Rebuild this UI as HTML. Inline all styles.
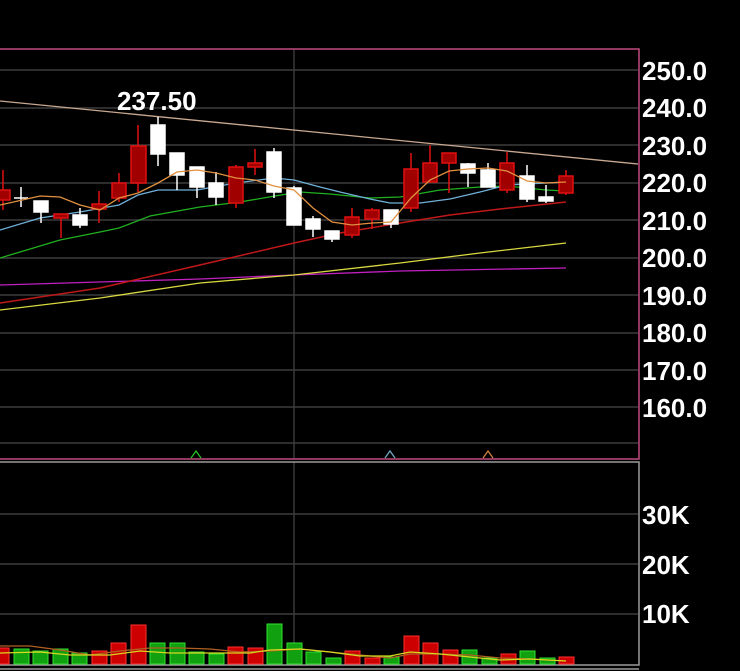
<!DOCTYPE html>
<html><head><meta charset="utf-8"><style>
html,body{margin:0;padding:0;background:#000;width:740px;height:671px;overflow:hidden}
svg{display:block}
text{font-family:"Liberation Sans",Arial,sans-serif;font-weight:bold;fill:#fff}
</style></head><body>
<svg width="740" height="671" viewBox="0 0 740 671" xmlns="http://www.w3.org/2000/svg">
<rect width="740" height="671" fill="#000"/>
<g stroke="#3c3c3c" stroke-width="1.4">
<line x1="0" y1="70" x2="638" y2="70"/>
<line x1="0" y1="108" x2="638" y2="108"/>
<line x1="0" y1="145" x2="638" y2="145"/>
<line x1="0" y1="183" x2="638" y2="183"/>
<line x1="0" y1="220" x2="638" y2="220"/>
<line x1="0" y1="258" x2="638" y2="258"/>
<line x1="0" y1="295" x2="638" y2="295"/>
<line x1="0" y1="333" x2="638" y2="333"/>
<line x1="0" y1="370" x2="638" y2="370"/>
<line x1="0" y1="407" x2="638" y2="407"/>
<line x1="0" y1="443" x2="638" y2="443"/>
<line x1="294" y1="49" x2="294" y2="459"/>
<line x1="0" y1="514" x2="638" y2="514"/>
<line x1="0" y1="564" x2="638" y2="564"/>
<line x1="0" y1="614" x2="638" y2="614"/>
<line x1="294" y1="462" x2="294" y2="665"/>
</g>
<polyline points="0,49 639,49 639,459 0,459" fill="none" stroke="#c04a80" stroke-width="1.5"/>
<polyline points="0,462 639,462 639,665 0,665" fill="none" stroke="#9a9a9a" stroke-width="1.5"/>
<line x1="0" y1="669" x2="639" y2="669" stroke="#9a9a9a" stroke-width="1.5"/>

<line x1="0" y1="101" x2="638" y2="164" stroke="#c8a890" stroke-width="1.3"/>
<polyline fill="none" stroke="#c020c0" stroke-width="1.3" points="0,285 200,279 294,275 400,271 566,268"/>
<polyline fill="none" stroke="#d8d840" stroke-width="1.3" points="0,310 100,298 200,283 294,275 400,263 480,253 566,243"/>
<polyline fill="none" stroke="#c01818" stroke-width="1.5" points="0,303 100,288 200,265 294,243 340,233 400,223 450,215 500,209 566,202"/>
<polyline fill="none" stroke="#20b020" stroke-width="1.3" points="0,258 60,240 100,232 119,228 150,216 200,207 240,202 275,196 300,192 330,194 370,198 400,197 440,190 480,187 507,186 546,190 566,191"/>
<polyline fill="none" stroke="#70b0d8" stroke-width="1.3" points="0,230 40,218 80,212 119,205 138,195 158,190 197,190 236,183 274,178 294,180 320,187 340,192 370,199 390,203 420,203 450,199 480,192 507,185 527,184 546,183 566,182"/>

<g stroke-width="1.5">
<g stroke="#e01010" fill="#a00000">
<line x1="3" y1="170" x2="3" y2="210"/><rect x="-4" y="190" width="14" height="10"/>
<line x1="61" y1="214" x2="61" y2="238"/><rect x="54" y="214" width="14" height="4"/>
<line x1="99" y1="191" x2="99" y2="223"/><rect x="92" y="204" width="14" height="5"/>
<line x1="119" y1="173" x2="119" y2="202"/><rect x="112" y="183" width="14" height="15"/>
<line x1="138" y1="125" x2="138" y2="192"/><rect x="131" y="146" width="15" height="37"/>
<line x1="236" y1="165" x2="236" y2="208"/><rect x="229" y="167" width="14" height="36"/>
<line x1="255" y1="149" x2="255" y2="175"/><rect x="248" y="163" width="14" height="4"/>
<line x1="352" y1="208" x2="352" y2="238"/><rect x="345" y="217" width="14" height="18"/>
<line x1="372" y1="208" x2="372" y2="229"/><rect x="365" y="210" width="14" height="9"/>
<line x1="411" y1="153" x2="411" y2="212"/><rect x="404" y="169" width="14" height="39"/>
<line x1="430" y1="145" x2="430" y2="183"/><rect x="423" y="163" width="14" height="19"/>
<line x1="449" y1="153" x2="449" y2="193"/><rect x="442" y="153" width="14" height="10"/>
<line x1="507" y1="152" x2="507" y2="193"/><rect x="500" y="163" width="14" height="27"/>
<line x1="566" y1="170" x2="566" y2="195"/><rect x="559" y="176" width="14" height="17"/>
</g>
<g stroke="#fff" fill="#fff">
<line x1="21" y1="187" x2="21" y2="207"/><line x1="14" y1="198" x2="28" y2="198"/>
<line x1="41" y1="201" x2="41" y2="223"/><rect x="34" y="201" width="14" height="11"/>
<line x1="80" y1="208" x2="80" y2="228"/><rect x="73" y="215" width="14" height="10"/>
<line x1="158" y1="117" x2="158" y2="166"/><rect x="151" y="125" width="14" height="29"/>
<line x1="177" y1="153" x2="177" y2="190"/><rect x="170" y="153" width="14" height="22"/>
<line x1="197" y1="167" x2="197" y2="198"/><rect x="190" y="167" width="14" height="20"/>
<line x1="216" y1="172" x2="216" y2="205"/><rect x="209" y="183" width="14" height="14"/>
<line x1="274" y1="148" x2="274" y2="198"/><rect x="267" y="152" width="14" height="40"/>
<line x1="294" y1="186" x2="294" y2="225"/><rect x="287" y="188" width="14" height="37"/>
<line x1="313" y1="216" x2="313" y2="237"/><rect x="306" y="219" width="14" height="10"/>
<line x1="332" y1="231" x2="332" y2="242"/><rect x="325" y="231" width="14" height="8"/>
<line x1="391" y1="210" x2="391" y2="228"/><rect x="384" y="210" width="14" height="14"/>
<line x1="468" y1="163" x2="468" y2="187"/><rect x="461" y="164" width="14" height="9"/>
<line x1="488" y1="163" x2="488" y2="187"/><rect x="481" y="170" width="14" height="17"/>
<line x1="527" y1="165" x2="527" y2="202"/><rect x="520" y="176" width="14" height="23"/>
<line x1="546" y1="185" x2="546" y2="203"/><rect x="539" y="197" width="14" height="4"/>
</g>
</g>
<polyline fill="none" stroke="#e09040" stroke-width="1.3" points="0,205 40,196 60,197 80,205 100,210 119,198 138,193 158,183 177,172 197,170 216,173 236,178 255,180 274,186 294,190 313,208 332,222 352,225 372,223 391,222 411,198 430,180 449,171 468,169 488,168 507,171 527,181 546,183 566,182"/>

<polyline points="191,458 196,451 201,458" fill="none" stroke="#20c020" stroke-width="1.3"/>
<polyline points="385,458 390,451 395,458" fill="none" stroke="#70a8c0" stroke-width="1.3"/>
<polyline points="483,458 488,451 493,458" fill="none" stroke="#d08040" stroke-width="1.3"/>

<text x="117" y="110" font-size="26">237.50</text>

<g stroke-width="1">
<g fill="#cc0000" stroke="#ff3030">
<rect x="-6" y="648" width="15" height="16"/>
<rect x="92" y="651" width="15" height="13"/>
<rect x="111" y="643" width="15" height="21"/>
<rect x="131" y="625" width="15" height="39"/>
<rect x="228" y="647" width="15" height="17"/>
<rect x="248" y="648" width="15" height="16"/>
<rect x="345" y="651" width="15" height="13"/>
<rect x="365" y="658" width="15" height="6"/>
<rect x="404" y="636" width="15" height="28"/>
<rect x="423" y="643" width="15" height="21"/>
<rect x="443" y="650" width="15" height="14"/>
<rect x="501" y="654" width="15" height="10"/>
<rect x="559" y="657" width="15" height="7"/>
</g>
<g fill="#10a010" stroke="#30e030">
<rect x="14" y="649" width="15" height="15"/>
<rect x="33" y="651" width="15" height="13"/>
<rect x="53" y="649" width="15" height="15"/>
<rect x="72" y="653" width="15" height="11"/>
<rect x="150" y="643" width="15" height="21"/>
<rect x="170" y="643" width="15" height="21"/>
<rect x="189" y="652" width="15" height="12"/>
<rect x="209" y="654" width="15" height="10"/>
<rect x="267" y="624" width="15" height="40"/>
<rect x="287" y="643" width="15" height="21"/>
<rect x="306" y="652" width="15" height="12"/>
<rect x="326" y="658" width="15" height="6"/>
<rect x="384" y="657" width="15" height="7"/>
<rect x="462" y="650" width="15" height="14"/>
<rect x="482" y="658" width="15" height="6"/>
<rect x="520" y="651" width="15" height="13"/>
<rect x="540" y="658" width="15" height="6"/>
</g>
</g>
<polyline fill="none" stroke="#b06020" stroke-width="1.3" points="0,646 30,646 60,650 90,655 120,651 150,648 180,648 210,649 240,652 270,651 300,649 330,652 360,655 390,658 410,654 440,654 470,655 500,658 530,659 566,661"/>
<polyline fill="none" stroke="#d8d820" stroke-width="1.3" points="0,653 40,652 70,655 110,655 140,651 170,653 210,653 250,653 270,650 300,649 330,652 360,656 390,656 410,652 440,654 470,657 500,660 530,659 566,661"/>

<g font-size="26">
<text x="642" y="80">250.0</text>
<text x="642" y="117">240.0</text>
<text x="642" y="155">230.0</text>
<text x="642" y="192">220.0</text>
<text x="642" y="230">210.0</text>
<text x="642" y="267">200.0</text>
<text x="642" y="305">190.0</text>
<text x="642" y="342">180.0</text>
<text x="642" y="380">170.0</text>
<text x="642" y="417">160.0</text>
<text x="642" y="524">30K</text>
<text x="642" y="574">20K</text>
<text x="642" y="623">10K</text>
</g>
</svg>
</body></html>
